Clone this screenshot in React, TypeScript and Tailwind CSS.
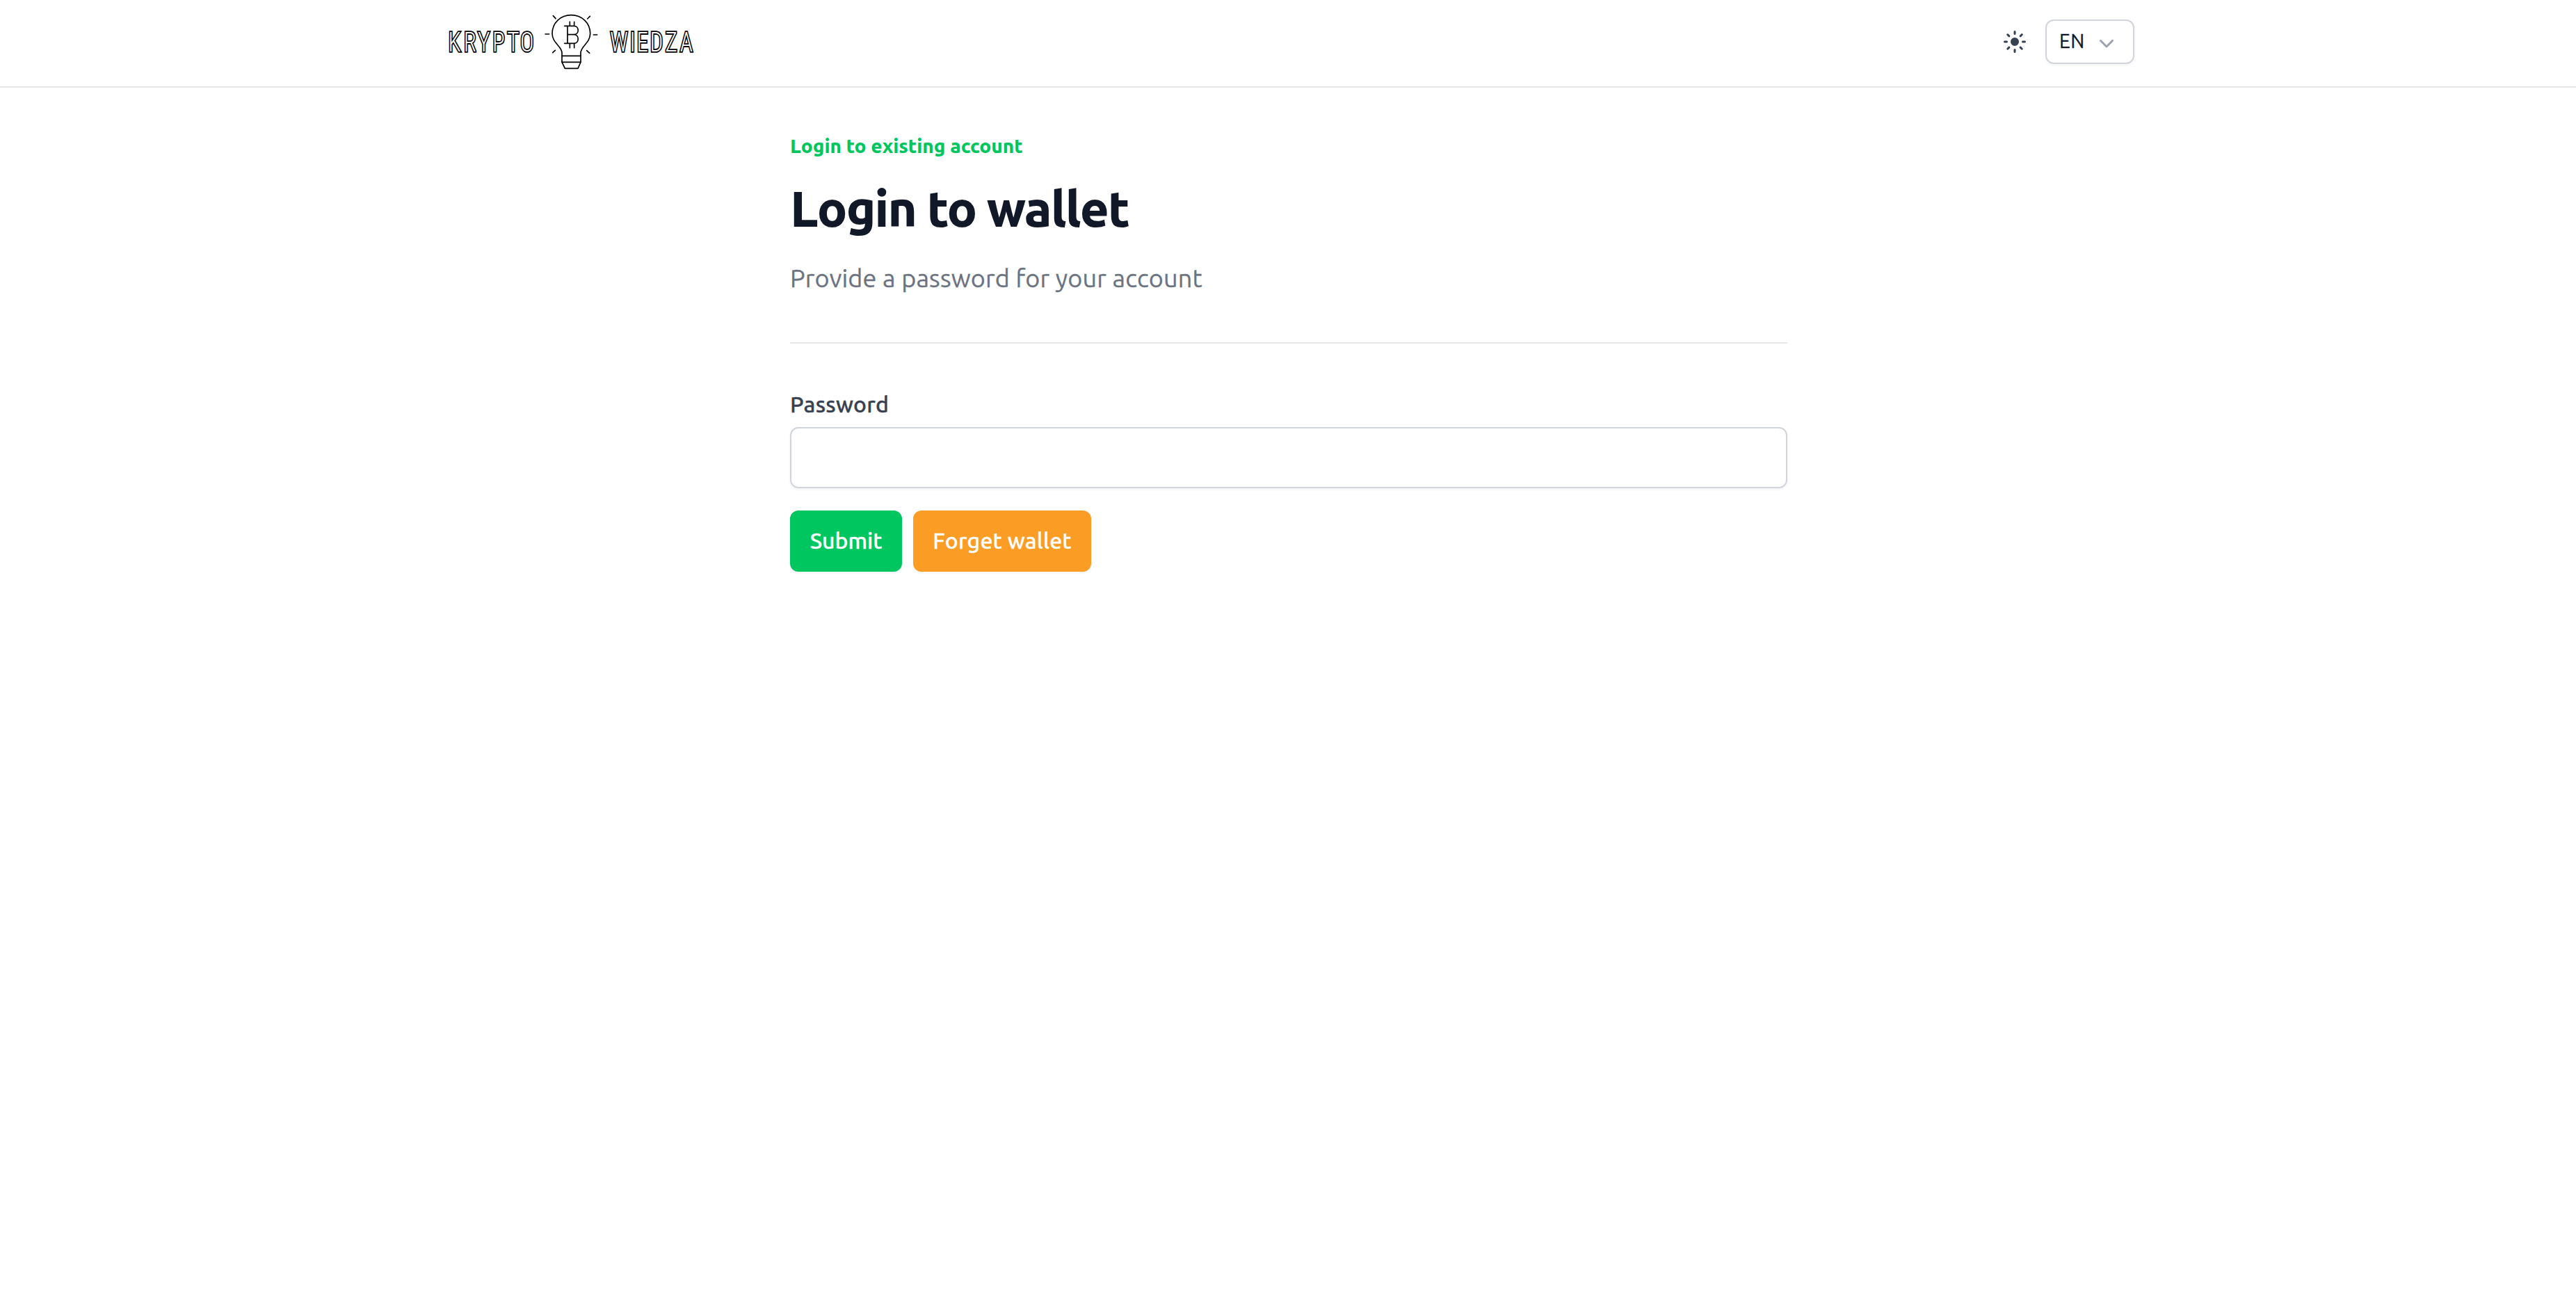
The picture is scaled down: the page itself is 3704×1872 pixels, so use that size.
import type { ButtonHTMLAttributes } from "react";
import clsx from "clsx";
import { HiMiniChevronDown, HiMiniSun } from "react-icons/hi2";

function Logo() {
  return (
    <svg
      viewBox="30 54 1080 258"
      className="h-[86px] w-[360px] overflow-visible"
      fill="none"
      stroke="#000"
      strokeWidth="5"
      strokeLinecap="round"
      strokeLinejoin="round"
      role="img"
      aria-label="Krypto Wiedza"
    >
      {/* white letters painted over a wide stroke, so only the outer line stays */}
      <g
        transform="scale(0.85 1)"
        className="font-['Roboto_Condensed','Roboto',sans-serif] font-light"
        fontSize="117"
        fill="#fff"
        strokeWidth="11"
        strokeLinejoin="miter"
        paintOrder="stroke"
      >
        <text x="50.8 129.6 200.9 275.5 350.2 416.7" y="222.7">
          KRYPTO
        </text>
        <text x="873.1 972 1007.3 1074.3 1152 1227.2" y="222.7">
          WIEDZA
        </text>
      </g>

      {/* bulb */}
      <path d="M534 268V228C534 199 492 186 492 145C492 98 529 65 574 65C619 65 656 98 656 145C656 186 615 199 615 228V268" />
      <path d="M534 241H615M534 268H615L603 295H547Z" />

      {/* rays */}
      <path d="M496 68L507 80M655 70L644 81M462 147H479M670 150H686M505 217L494 227M641 218L653 229" />

      {/* bitcoin sign */}
      <path d="M545 112H585C610 112 610 149 585 149H558M585 149C610 149 610 187 585 187H545M558 112V187M568 94V112M587 94V112M568 187V206M587 187V206" />
    </svg>
  );
}

function Header() {
  return (
    <header className="border-b-2 border-[#e5e7eb]">
      <div className="mx-auto flex h-[124px] w-[2434px] items-center justify-between">
        <a href="#" className="ml-[5px] pb-0.5">
          <Logo />
        </a>
        <div className="flex items-center gap-6 pb-1">
          <button type="button" aria-label="Toggle theme" className="text-[#374151]">
            <HiMiniSun className="size-10" />
          </button>
          <button
            type="button"
            className="flex h-16 w-32 items-center justify-between rounded-xl border-2 border-[#d1d5db] px-[18px] text-[28px] leading-10 tracking-[0.5px] text-[#111827] shadow-[0_2px_4px_rgb(0_0_0/0.05)]"
          >
            <span className="pb-0.5 [-webkit-text-stroke:0.3px_currentColor]">EN</span>
            <HiMiniChevronDown className="mt-0.5 size-10 text-[#9ca3af]" />
          </button>
        </div>
      </div>
    </header>
  );
}

function Button({ className, ...props }: ButtonHTMLAttributes<HTMLButtonElement>) {
  return (
    <button
      className={clsx(
        "h-[88px] rounded-xl pb-0.5 text-[32px] leading-10 font-medium text-white shadow-[0_2px_4px_rgb(0_0_0/0.05)] [-webkit-text-stroke:0.3px_currentColor]",
        className
      )}
      {...props}
    />
  );
}

export default function App() {
  return (
    <div className="min-h-screen bg-white font-['Ubuntu','Noto_Sans',sans-serif]">
      <Header />
      <main className="mx-auto w-[1436px] pt-16 pl-0.5">
        <p className="text-[28px] leading-10 font-extrabold text-[#00c660]">
          Login to existing account
        </p>
        <h1 className="mt-[30px] text-[72px] leading-20 font-extrabold tracking-tight text-[#111827]">
          Login to wallet
        </h1>
        <p className="mt-8 text-[36px] leading-14 tracking-[0.18px] text-[#6b7280] [-webkit-text-stroke:0.3px_currentColor]">
          Provide a password for your account
        </p>
        <form className="mt-16 border-t-2 border-[#e5e7eb] pt-16">
          <label
            htmlFor="password"
            className="block pb-0.5 text-[32px] leading-[46px] font-medium tracking-[0.28px] text-[#374151] [-webkit-text-stroke:0.3px_currentColor]"
          >
            Password
          </label>
          <input
            id="password"
            type="password"
            className="mt-2 block h-[88px] w-full rounded-xl border-2 border-[#d1d5db] px-6 text-[32px] shadow-[0_2px_4px_rgb(0_0_0/0.05)]"
          />
          <div className="mt-8 flex gap-4">
            <Button type="button" className="w-[161px] bg-[#00c660]">
              Submit
            </Button>
            <Button type="button" className="w-64 bg-[#fb9c24] tracking-[0.23px]">
              Forget wallet
            </Button>
          </div>
        </form>
      </main>
    </div>
  );
}
